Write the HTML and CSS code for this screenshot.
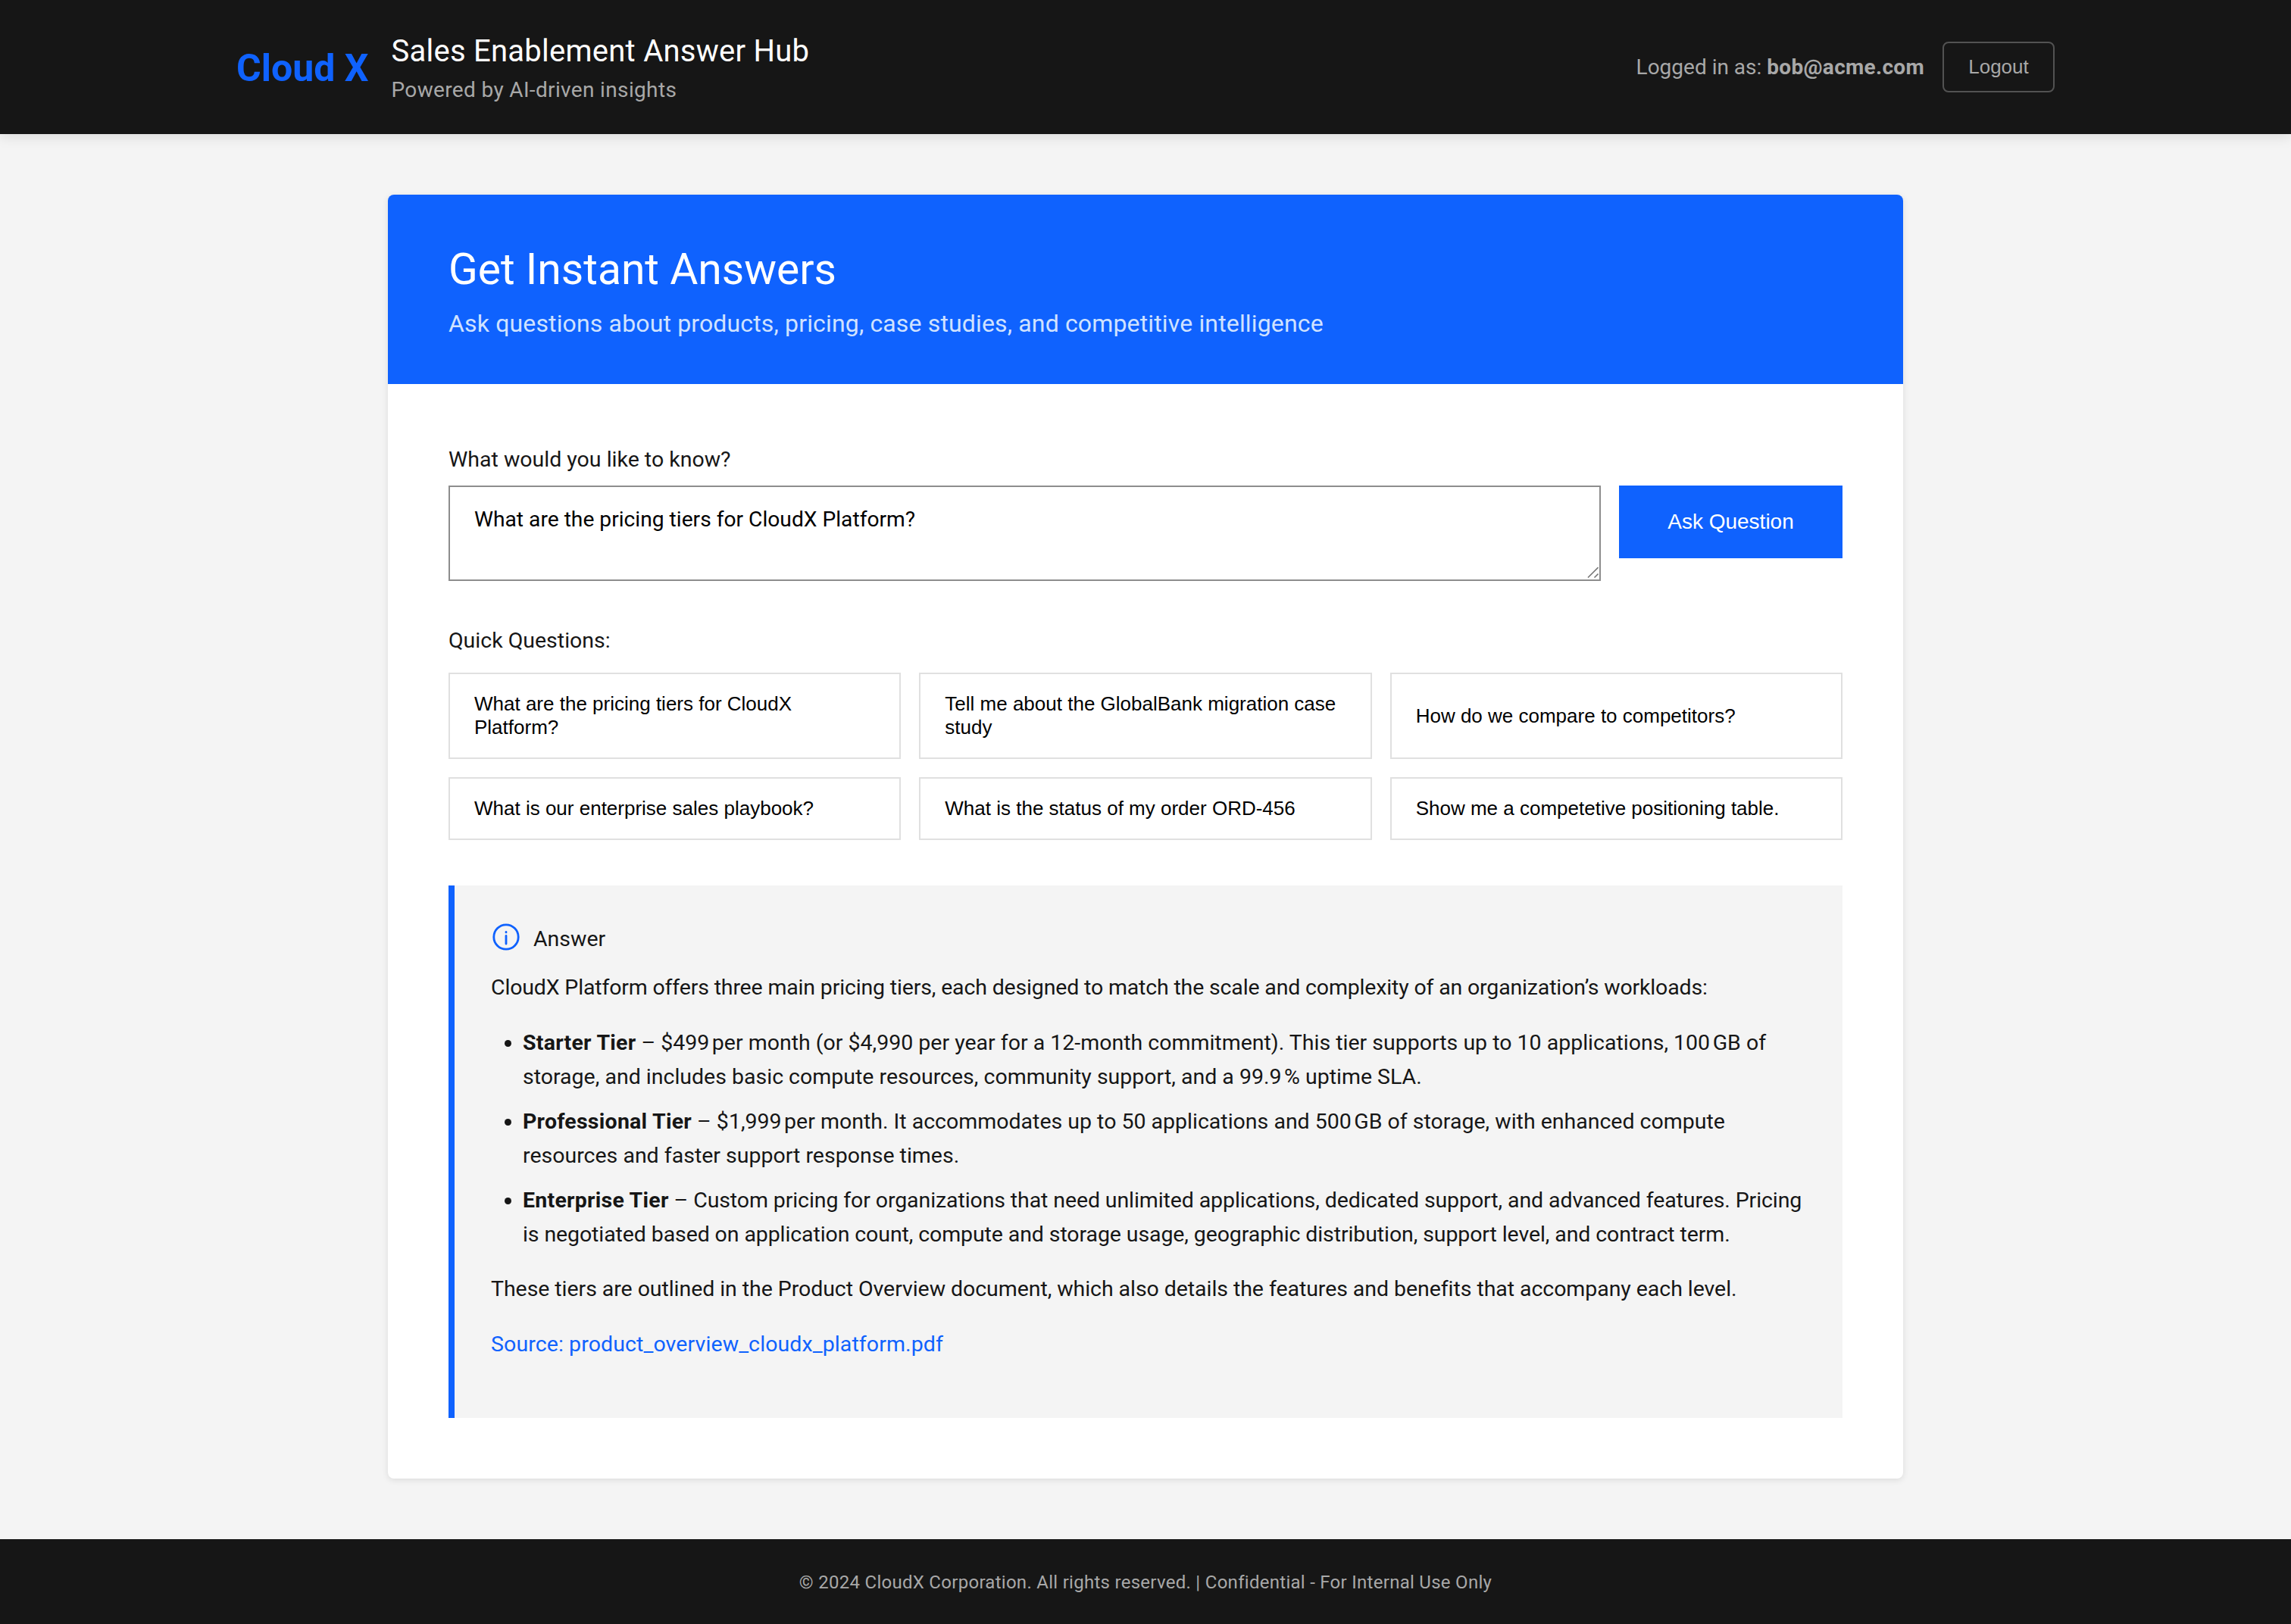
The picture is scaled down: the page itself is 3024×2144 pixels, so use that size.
FILE: index.html
```html
<!DOCTYPE html>
<html lang="en">
<head>
  <meta charset="UTF-8" />
  <title>Sales Enablement Answer Hub</title>
  <link rel="stylesheet" href="styles.css">
</head>
<body>

  <header class="top-bar">
    <div class="brand">
      <div class="logo">Cloud X</div>
      <div class="brand-text">
        <h1>Sales Enablement Answer Hub</h1>
        <p>Powered by AI-driven insights</p>
      </div>
    </div>
    <div class="user-area">
      <span class="user-label">Logged in as: <strong>bob@acme.com</strong></span>
      <button class="logout-btn">Logout</button>
    </div>
  </header>

  <main class="page">
    <section class="card">
      <div class="card-head">
        <h2>Get Instant Answers</h2>
        <p>Ask questions about products, pricing, case studies, and competitive intelligence</p>
      </div>

      <div class="card-body">
        <label class="field-label" for="question">What would you like to know?</label>
        <div class="ask-row">
          <div class="ask-box">
            <textarea id="question" class="ask-input">What are the pricing tiers for CloudX Platform?</textarea>
            <svg class="grip" viewBox="0 0 16 16" fill="none" stroke="#777" stroke-width="1.6">
              <path d="M2 15.5L15.5 2" />
              <path d="M10.5 15.5L15.5 10.5" />
            </svg>
          </div>
          <button class="ask-btn">Ask Question</button>
        </div>

        <div class="quick-label">Quick Questions:</div>
        <div class="quick-grid">
          <button class="quick-btn">What are the pricing tiers for CloudX Platform?</button>
          <button class="quick-btn">Tell me about the GlobalBank migration case study</button>
          <button class="quick-btn">How do we compare to competitors?</button>
          <button class="quick-btn">What is our enterprise sales playbook?</button>
          <button class="quick-btn">What is the status of my order ORD-456</button>
          <button class="quick-btn">Show me a competetive positioning table.</button>
        </div>

        <div class="answer">
          <div class="answer-title">
            <svg class="answer-icon" viewBox="0 0 36 36" fill="none" stroke="#0f62fe" stroke-width="2.8" stroke-linecap="round">
              <circle cx="18" cy="18" r="16.2"/>
              <path d="M18 16.5v10.5" />
              <path d="M18 11.5v.4" />
            </svg>
            <span>Answer</span>
          </div>
          <p class="intro">CloudX Platform offers three main pricing tiers, each designed to match the scale and complexity of an organization’s workloads:</p>
          <ul>
            <li><strong>Starter Tier</strong> – $499&#8239;per month (or $4,990 per year for a 12-month commitment). This tier supports up to 10 applications, 100&#8239;GB of storage, and includes basic compute resources, community support, and a 99.9&#8239;% uptime SLA.</li>
            <li><strong>Professional Tier</strong> – $1,999&#8239;per month. It accommodates up to 50 applications and 500&#8239;GB of storage, with enhanced compute resources and faster support response times.</li>
            <li class="tier-long"><strong>Enterprise Tier</strong> – Custom pricing for organizations that need unlimited applications, dedicated support, and advanced features. Pricing is negotiated based on application count, compute and storage usage, geographic distribution, support level, and contract term.</li>
          </ul>
          <p class="outro">These tiers are outlined in the Product Overview document, which also details the features and benefits that accompany each level.</p>
          <p class="source">Source: product_overview_cloudx_platform.pdf</p>
        </div>
      </div>
    </section>
  </main>

  <footer class="bottom-bar">© 2024 CloudX Corporation. All rights reserved. | Confidential - For Internal Use Only</footer>

</body>
</html>
```

FILE: styles.css
```css
* {
  box-sizing: border-box;
}

body {
  margin: 0;
  font-family: Roboto, "Liberation Sans", sans-serif;
  background: #f4f4f4;
  color: #161616;
}

.top-bar {
  height: 177px;
  padding: 0 312px;
  display: flex;
  justify-content: space-between;
  align-items: center;
  background: #161616;
  box-shadow: 0 4px 16px rgba(0,0,0,0.1);
}

.brand {
  display: flex;
  align-items: center;
  gap: 30px;
}

.logo {
  font-size: 50px;
  font-weight: 700;
  color: #0f62fe;
  margin-top: 3px;
}

.brand-text h1 {
  margin: 4px 0 5px;
  font-size: 40px;
  font-weight: 400;
  line-height: 52px;
  letter-spacing: 0.25px;
  color: #fff;
}

.brand-text p {
  margin: 0;
  font-size: 28px;
  line-height: 40px;
  letter-spacing: 0.35px;
  color: #a8a8a8;
}

.user-area {
  display: flex;
  align-items: center;
  gap: 24px;
}

.user-label {
  font-size: 28px;
  color: #a8a8a8;
}

.user-label strong {
  letter-spacing: 0.3px;
}

.logout-btn {
  width: 148px;
  height: 67px;
  background: none;
  border: 2px solid #525252;
  border-radius: 8px;
  color: #a8a8a8;
  font-family: "Liberation Sans", sans-serif;
  font-size: 26px;
}

.page {
  padding: 80px 0 80px;
}

.card {
  width: 2000px;
  margin: 0 auto;
  background: #fff;
  border-radius: 8px;
  overflow: hidden;
  box-shadow: 0 2px 8px rgba(0,0,0,0.1);
}

.card-head {
  height: 250px;
  padding: 63px 80px 0;
  background: #0f62fe;
  color: #fff;
}

.card-head h2 {
  margin: 0 0 13px;
  font-size: 57px;
  font-weight: 400;
  line-height: 72px;
}

.card-head p {
  margin: 0;
  font-size: 32px;
  line-height: 44px;
  letter-spacing: 0.15px;
  color: #d0e2ff;
}

.card-body {
  padding: 80px;
}

.field-label,
.quick-label {
  display: block;
  font-size: 28.5px;
  line-height: 40px;
}

.ask-row {
  display: flex;
  align-items: flex-start;
  gap: 24px;
  margin: 14px 0 59px;
}

.ask-box {
  position: relative;
  flex: 1;
  display: flex;
}

.ask-input {
  flex: 1;
  height: 126px;
  padding: 23px 32px;
  border: 2px solid #8d8d8d;
  border-radius: 0;
  outline: none;
  resize: none;
  font-family: Roboto, sans-serif;
  font-size: 28.2px;
  line-height: 40px;
  color: #000;
}

.grip {
  position: absolute;
  right: 3px;
  bottom: 4px;
  width: 16px;
  height: 16px;
}

.ask-btn {
  width: 295px;
  height: 96px;
  border: none;
  background: #0f62fe;
  color: #fff;
  font-family: "Liberation Sans", sans-serif;
  font-size: 28px;
}

.quick-grid {
  display: grid;
  grid-template-columns: repeat(3, 1fr);
  gap: 24px;
  margin: 22px 0 60px;
}

.quick-btn {
  padding: 24px 32px;
  border: 2px solid #e0e0e0;
  background: #fff;
  color: #000;
  text-align: left;
  font-family: "Liberation Sans", sans-serif;
  font-size: 26px;
  line-height: 31px;
}

.answer {
  height: 703px;
  padding: 48px 48px 0;
  border-left: 8px solid #0f62fe;
  background: #f4f4f4;
  font-size: 28.5px;
  line-height: 45px;
}

.answer-title {
  display: flex;
  gap: 18px;
  margin-bottom: 19px;
}

.answer-icon {
  width: 36px;
  height: 36px;
  margin: 2px 0 0 2px;
}

.answer p {
  margin: 0 0 28px;
}

.answer .intro {
  letter-spacing: -0.16px;
}

.answer .outro {
  letter-spacing: -0.06px;
}

.answer ul {
  margin: 0 0 27px;
  padding-left: 42px;
}

.answer li {
  margin-bottom: 14px;
}

.answer strong {
  letter-spacing: 0.25px;
}

.answer .tier-long {
  letter-spacing: -0.1px;
}

.answer .source {
  letter-spacing: 0.1px;
  color: #0f62fe;
}

.bottom-bar {
  height: 113px;
  padding-top: 42px;
  background: #161616;
  color: #a8a8a8;
  font-size: 24px;
  line-height: 30px;
  letter-spacing: 0.28px;
  text-align: center;
}
```
